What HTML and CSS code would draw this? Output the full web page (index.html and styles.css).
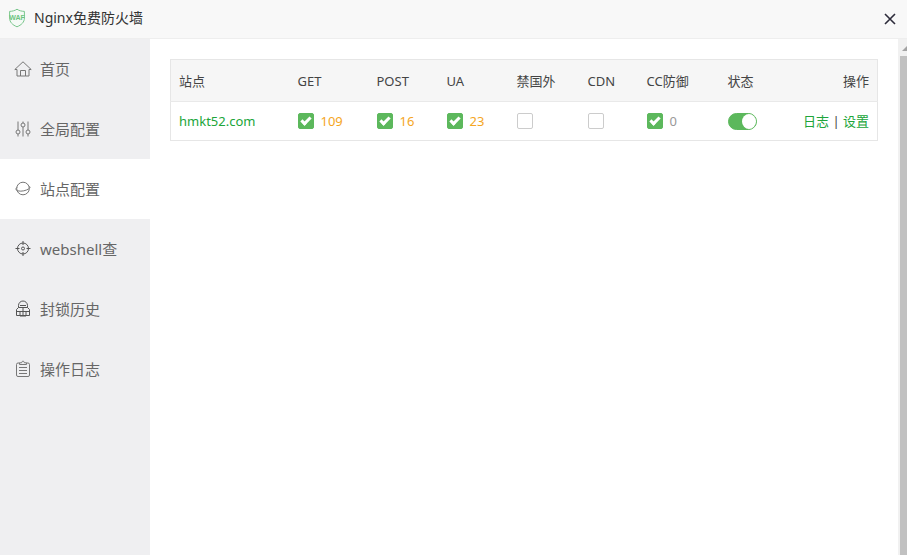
FILE: index.html
```html
<!DOCTYPE html>
<html lang="zh-CN">
<head>
<meta charset="utf-8">
<title>Nginx免费防火墙</title>
<link rel="stylesheet" href="styles.css">
</head>
<body>
<header class="titlebar">
  <svg class="logo" viewBox="0 0 18 20" aria-hidden="true">
    <path d="M9 1.200C7 2.600 4.400 3.300 1.600 3.400V10c0 4.200 3 7 7.400 8.800C13.400 17 16.400 14.200 16.400 10V3.400C13.600 3.300 11 2.600 9 1.200z"/>
    <text x="9" y="12" text-anchor="middle">WAF</text>
  </svg>
  <h1 class="title">Nginx免费防火墙</h1>
  <button class="close" type="button" aria-label="关闭">
    <svg viewBox="0 0 12 12" aria-hidden="true"><path d="M1 1l10 10M11 1L1 11"/></svg>
  </button>
</header>
<div class="body">
  <nav class="menu">
    <a class="item" href="#home">
      <svg viewBox="0 0 18 18"><path d="M.8 9.500L9 1.800l8.200 7.700H15V16h-3.500v-5.500h-5V16H3V9.500zM6.500 16h5"/></svg>首页</a>
    <a class="item" href="#global">
      <svg viewBox="0 0 18 18"><path d="M4 1.500V10M4 14v2.500M9 1.500V3M9 7v9.500M14 1.500V10M14 14v2.500"/><circle cx="4" cy="12" r="2"/><circle cx="9" cy="5" r="2"/><circle cx="14" cy="12" r="2"/></svg>全局配置</a>
    <a class="item active" href="#site">
      <svg viewBox="0 0 18 18"><circle cx="9" cy="8.500" r="6.300"/><path d="M3 7.300C1.300 8.800 1.700 10.300 4 10.900c3.500.8 8.300-.3 10.900-2.200 1.300-.9 1.500-1.800.4-2.300"/></svg>站点配置</a>
    <a class="item" href="#webshell">
      <svg class="strong" viewBox="0 0 18 18"><circle cx="9" cy="8.500" r="5.500"/><circle cx="9" cy="8.500" r="1.500"/><path d="M9 1v4M9 12v4M1.500 8.500h4M12.500 8.500h4"/></svg>webshell查</a>
    <a class="item" href="#block">
      <svg class="strong" viewBox="0 0 18 18"><path d="M4.500 7.500V5.500a4.500 4.500 0 0 1 9 0v2M4.500 7.500h9l2 2v6h-13v-6zM6 5.500h6M2.500 11.500h13M9 7.500v8.500M6 11.500v4.500h6v-4.500"/></svg>封锁历史</a>
    <a class="item" href="#log">
      <svg viewBox="0 0 18 18"><path d="M5.500 3H4a1.500 1.500 0 0 0-1.500 1.500v10.500A1.500 1.500 0 0 0 4 16.500h10a1.500 1.500 0 0 0 1.500-1.500V4.500A1.500 1.500 0 0 0 14 3h-1.500M5.500 4.500V2.800h2Q9-.8 10.500 2.800h2v1.700zM5 7.500h8M5 10.500h8M5 13.500h8"/></svg>操作日志</a>
  </nav>
  <main class="content">
    <table class="sites">
      <colgroup>
        <col class="c-site"><col class="c-get"><col class="c-count"><col class="c-count"><col class="c-abroad"><col class="c-cdn"><col class="c-cc"><col class="c-state"><col>
      </colgroup>
      <thead>
        <tr><th>站点</th><th>GET</th><th>POST</th><th>UA</th><th>禁国外</th><th>CDN</th><th>CC防御</th><th>状态</th><th class="right">操作</th></tr>
      </thead>
      <tbody>
        <tr>
          <td><a href="#hmkt52">hmkt52.com</a></td>
          <td><label class="opt"><input type="checkbox" aria-label="GET" checked><span class="hits">109</span></label></td>
          <td><label class="opt"><input type="checkbox" aria-label="POST" checked><span class="hits">16</span></label></td>
          <td><label class="opt"><input type="checkbox" aria-label="UA" checked><span class="hits">23</span></label></td>
          <td><label class="opt"><input type="checkbox" aria-label="禁国外"></label></td>
          <td><label class="opt"><input type="checkbox" aria-label="CDN"></label></td>
          <td><label class="opt"><input type="checkbox" aria-label="CC防御" checked><span class="none">0</span></label></td>
          <td><label class="opt"><input class="switch" type="checkbox" aria-label="状态" checked></label></td>
          <td class="right"><a href="#logs">日志</a> | <a href="#settings">设置</a></td>
        </tr>
      </tbody>
    </table>
  </main>
  <div class="scroll" aria-hidden="true">
    <svg viewBox="0 0 9 17"><path d="M9 7v5H4z"/></svg>
    <div class="thumb"></div>
  </div>
</div>
</body>
</html>
```
FILE: styles.css
```css
*, *::after { box-sizing: border-box; }

body {
  margin: 0;
  height: 100vh;
  display: flex;
  flex-direction: column;
  overflow: hidden;
  background: #fff;
  color: #444;
  font: 13px/20px "Noto Sans", "Noto Sans CJK SC", sans-serif;
}

a { color: #20a53a; text-decoration: none; }

.titlebar {
  display: flex;
  align-items: center;
  flex: none;
  height: 39px;
  padding: 0 10px 2px 8px;
  background: #f8f8f8;
  border-bottom: 1px solid #eee;
}
.logo { width: 18px; height: 20px; margin-right: 8px; }
.logo path { fill: #f5faf6; stroke: #79c68c; }
.logo text { font: bold 7px "Liberation Sans", sans-serif; fill: #6cc480; }
.title { flex: 1; margin: 0; font-size: 14px; font-weight: 400; color: #333; }
.close {
  display: flex;
  padding: 0;
  margin-top: 2px;
  border: 0;
  background: none;
}
.close svg { width: 14px; height: 12px; stroke: #2d2c3b; stroke-width: 1.6; }

.body { display: flex; flex: 1; min-height: 0; }

.menu { flex: none; width: 150px; background: #efeff1; }
.item {
  display: flex;
  align-items: center;
  height: 60px;
  padding-left: 14px;
  font-size: 15px;
  color: #666;
  white-space: nowrap;
}
.item.active { background: #fff; }
.item svg {
  width: 18px;
  height: 18px;
  margin-right: 8px;
  fill: none;
  stroke: #777;
  stroke-width: 1;
}
.item .strong { stroke: #555; }

.content { flex: 1; min-width: 0; padding: 20px; }

.sites {
  width: 100%;
  table-layout: fixed;
  border-collapse: collapse;
  border: 1px solid #e6e6e6;
}
.c-site { width: 119px; }
.c-get { width: 79px; }
.c-count { width: 70px; }
.c-abroad { width: 71px; }
.c-cdn { width: 59px; }
.c-cc { width: 81px; }
.c-state { width: 60px; }
.sites th, .sites td {
  padding: 0 8px;
  text-align: left;
  font-weight: 400;
  white-space: nowrap;
}
.sites th { height: 42px; background: #f6f6f6; border-bottom: 1px solid #e9e9e9; }
.sites td { height: 39px; }
.sites .right { text-align: right; }

.opt { display: flex; align-items: center; gap: 7px; }
.hits { color: #f5a623; }
.none { color: #999; }

input {
  appearance: none;
  flex: none;
  width: 16px;
  height: 16px;
  margin: 0;
  border: 1px solid #ccc;
  border-radius: 2px;
  background: #fff;
}
input:checked { position: relative; border-color: #5cb85c; background: #5cb85c; }
input:checked:not(.switch)::after {
  content: "";
  position: absolute;
  left: 2px;
  top: 3px;
  width: 10px;
  height: 6px;
  border: solid #fff;
  border-width: 0 0 3px 3px;
  transform: rotate(-45deg);
}
.switch { width: 29px; height: 17px; border-radius: 9px; }
.switch::after {
  content: "";
  position: absolute;
  right: 0;
  top: 0;
  width: 14px;
  height: 15px;
  border-radius: 50%;
  background: #fff;
}

.scroll { display: flex; flex-direction: column; flex: none; width: 9px; background: #f1f1f1; }
.scroll svg { flex: none; width: 9px; height: 17px; fill: #a3a3a3; }
.thumb { flex: 1; margin-left: 2px; background: #c1c1c1; }
```
